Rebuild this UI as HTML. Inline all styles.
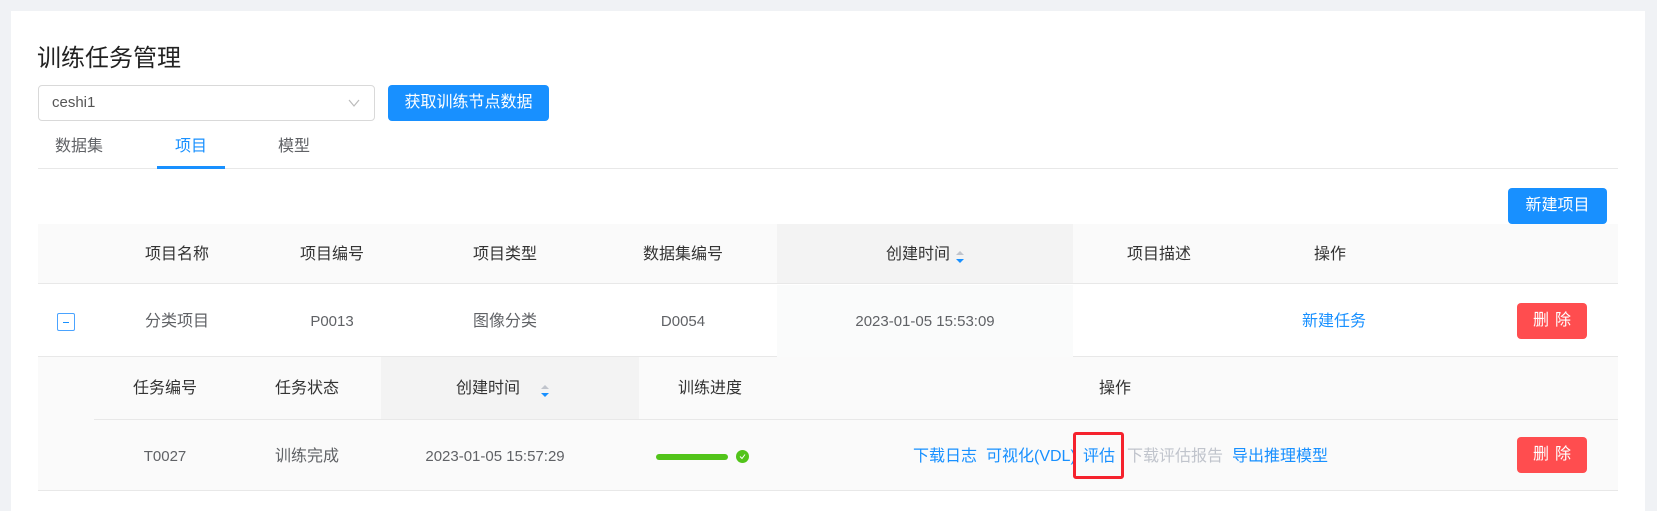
<!DOCTYPE html><html><head><meta charset="utf-8"><style>
*{margin:0;padding:0;box-sizing:border-box}
body{width:1657px;height:498px;background:#f0f2f5;font-family:"Liberation Sans","Noto Sans CJK SC",sans-serif;font-size:16px;line-height:22px;color:#606266;position:relative;overflow:hidden}
.a{position:absolute}
.card{left:11px;top:11px;width:1634px;height:500px;background:#fff}
.c{position:absolute;transform:translateX(-50%);white-space:nowrap}
.l{font-size:15px}
.h{color:#333}
.btn{position:absolute;background:#1890ff;color:#fff;border-radius:4px;text-align:center}
.del{position:absolute;background:#ff4d4f;color:#fff;border-radius:4px;text-align:center;width:70px;height:36px;line-height:36px;letter-spacing:6px;text-indent:6px}
.lnk{color:#1890ff}
</style></head><body>
<div class="a card"></div>
<div class="a" style="left:37px;top:44px;font-size:24px;line-height:30px;color:#222">训练任务管理</div>
<div class="a l" style="left:38px;top:85px;width:337px;height:36px;border:1px solid #d9d9d9;border-radius:4px;padding-left:13px;line-height:34px;color:#555">ceshi1
<svg class="a" style="right:14px;top:13px" width="12" height="8"><path d="M1 1 L6 7 L11 1" fill="none" stroke="#bbb" stroke-width="1.2"/></svg></div>
<div class="btn" style="left:388px;top:85px;width:161px;height:36px;line-height:36px;font-size:16px">获取训练节点数据</div>
<div class="c" style="left:79px;top:136px">数据集</div>
<div class="c" style="left:191px;top:136px;color:#1890ff">项目</div>
<div class="c" style="left:294px;top:136px">模型</div>
<div class="a" style="left:38px;top:168px;width:1580px;height:1px;background:#e8e8e8"></div>
<div class="a" style="left:157px;top:166px;width:68px;height:3px;background:#1890ff"></div>
<div class="btn" style="left:1508px;top:188px;width:99px;height:36px;line-height:36px;font-size:16px">新建项目</div>
<!-- header -->
<div class="a" style="left:38px;top:224px;width:1580px;height:60px;background:#fafafa;border-bottom:1px solid #e8e8e8"></div>
<div class="a" style="left:777px;top:224px;width:296px;height:60px;background:#f3f3f3;border-bottom:1px solid #e8e8e8"></div>
<div class="h c" style="left:177px;top:244px">项目名称</div>
<div class="h c" style="left:332px;top:244px">项目编号</div>
<div class="h c" style="left:505px;top:244px">项目类型</div>
<div class="h c" style="left:683px;top:244px">数据集编号</div>
<div class="h c" style="left:918px;top:244px">创建时间</div>
<svg class="a" style="left:955px;top:250px" width="10" height="14"><path d="M1 5 L5 1 L9 5Z" fill="#c0c4cc"/><path d="M1 9 L5 13 L9 9Z" fill="#1890ff"/></svg>
<div class="h c" style="left:1159px;top:244px">项目描述</div>
<div class="h c" style="left:1330px;top:244px">操作</div>
<!-- row1 -->
<div class="a" style="left:38px;top:285px;width:1580px;height:72px;border-bottom:1px solid #e8e8e8"></div>
<div class="a" style="left:777px;top:285px;width:296px;height:72px;background:#fafbfb"></div>
<div class="a" style="left:57px;top:313px;width:18px;height:18px;border:1px solid #4aa3ff;border-radius:2px"><div class="a" style="left:5px;top:8px;width:6px;height:1px;background:#1890ff"></div></div>
<div class="c" style="left:177px;top:311px">分类项目</div>
<div class="c l" style="left:332px;top:311px">P0013</div>
<div class="c" style="left:505px;top:311px">图像分类</div>
<div class="c l" style="left:683px;top:311px">D0054</div>
<div class="c l" style="left:925px;top:311px">2023-01-05 15:53:09</div>
<div class="c lnk" style="left:1334px;top:311px">新建任务</div>
<div class="del" style="left:1517px;top:303px">删除</div>
<!-- sub -->
<div class="a" style="left:38px;top:357px;width:1580px;height:134px;background:#fafafa;border-bottom:1px solid #e8e8e8"></div>
<div class="a" style="left:94px;top:419px;width:1524px;height:1px;background:#e8e8e8"></div>
<div class="a" style="left:381px;top:357px;width:258px;height:62px;background:#f3f3f3"></div>
<div class="h c" style="left:165px;top:378px">任务编号</div>
<div class="h c" style="left:307px;top:378px">任务状态</div>
<div class="h c" style="left:488px;top:378px">创建时间</div>
<svg class="a" style="left:540px;top:384px" width="10" height="14"><path d="M1 5 L5 1 L9 5Z" fill="#c0c4cc"/><path d="M1 9 L5 13 L9 9Z" fill="#1890ff"/></svg>
<div class="h c" style="left:710px;top:378px">训练进度</div>
<div class="h c" style="left:1115px;top:378px">操作</div>
<div class="c l" style="left:165px;top:446px">T0027</div>
<div class="c" style="left:307px;top:446px">训练完成</div>
<div class="c l" style="left:495px;top:446px">2023-01-05 15:57:29</div>
<div class="a" style="left:656px;top:454px;width:72px;height:6px;border-radius:3px;background:#52c41a"></div>
<div class="a" style="left:736px;top:450px;width:13px;height:13px;border-radius:50%;background:#52c41a"><svg class="a" style="left:3px;top:3px" width="7" height="7"><path d="M1 3.5 L3 5.5 L6 1.5" fill="none" stroke="#fff" stroke-width="1"/></svg></div>
<div class="a lnk" style="left:913px;top:446px;white-space:nowrap">下载日志</div>
<div class="a lnk" style="left:986px;top:446px;white-space:nowrap">可视化(VDL)</div>
<div class="a lnk" style="left:1083px;top:446px;white-space:nowrap">评估</div>
<div class="a" style="left:1073px;top:432px;width:51px;height:47px;border:3px solid #f5222d;border-radius:3px"></div>
<div class="a" style="left:1127px;top:446px;color:#c0c4cc;white-space:nowrap">下载评估报告</div>
<div class="a lnk" style="left:1232px;top:446px;white-space:nowrap">导出推理模型</div>
<div class="del" style="left:1517px;top:437px">删除</div>
</body></html>
